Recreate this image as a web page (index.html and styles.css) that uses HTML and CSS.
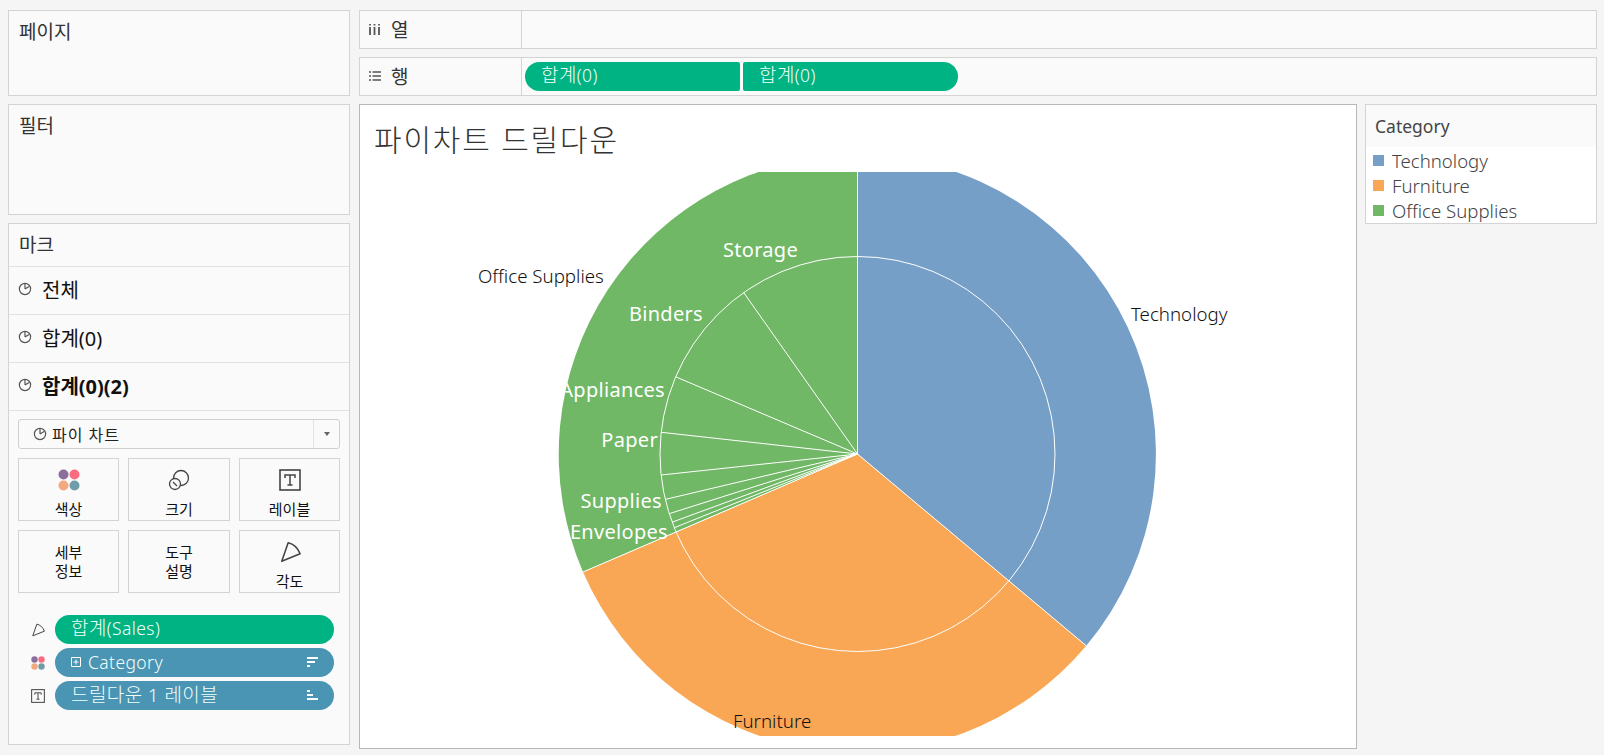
FILE: index.html
```html
<!DOCTYPE html>
<html lang="ko">
<head>
    <meta charset="UTF-8">
    <title>파이차트 드릴다운</title>
    <link rel="stylesheet" href="styles.css">
</head>
<body>
<svg class="defs" width="0" height="0">
    <symbol id="i-pie" viewBox="0 0 14 14">
        <circle cx="7" cy="7" r="5.6" fill="none" stroke="currentColor" stroke-width="1.2"/>
        <path d="M7 7V1.4M7 7l4-2.6" fill="none" stroke="currentColor" stroke-width="1.2"/>
    </symbol>
    <symbol id="i-angle" viewBox="0 0 24 24">
        <path d="M3 22L10 2Q19 4 23 14Z" fill="none" stroke="currentColor" stroke-width="1.7" stroke-linejoin="round"/>
    </symbol>
    <symbol id="i-text" viewBox="0 0 22 22">
        <rect x="1" y="1" width="20" height="20" fill="none" stroke="currentColor" stroke-width="1.6"/>
        <path d="M6 9V6h10v3M11 6v10M8.500 16h5" fill="none" stroke="currentColor" stroke-width="1.5"/>
    </symbol>
    <symbol id="i-dots" viewBox="0 0 22 22">
        <circle cx="5.500" cy="5.500" r="5" fill="#8a6f9c"/>
        <circle cx="16.500" cy="5.500" r="5" fill="#f96d7f"/>
        <circle cx="5.500" cy="16.500" r="5" fill="#f2a97f"/>
        <circle cx="16.500" cy="16.500" r="5" fill="#6f9ca6"/>
    </symbol>
</svg>

<div class="app">
    <div class="side">
        <section class="card card-page"><h2 class="card-title">페이지</h2></section>
        <section class="card card-filter"><h2 class="card-title">필터</h2></section>
        <section class="card marks">
            <h2 class="marks-head">마크</h2>
            <div class="mark-row"><svg class="pie-ic"><use href="#i-pie"/></svg><span>전체</span></div>
            <div class="mark-row"><svg class="pie-ic"><use href="#i-pie"/></svg><span>합계(0)</span></div>
            <div class="mark-row mark-row-on"><svg class="pie-ic"><use href="#i-pie"/></svg><span>합계(0)(2)</span></div>

            <div class="marks-body">
                <div class="select">
                    <div class="select-val"><svg class="pie-ic"><use href="#i-pie"/></svg>파이 차트</div>
                    <div class="select-btn"><i class="caret"></i></div>
                </div>

                <div class="mark-btns">
                    <div class="mark-btn">
                        <svg class="btn-ic" viewBox="0 0 22 22"><use href="#i-dots"/></svg>
                        <span>색상</span>
                    </div>
                    <div class="mark-btn">
                        <svg class="btn-ic" viewBox="0 0 22 22">
                            <circle cx="13" cy="9" r="7.500" fill="none" stroke="#444" stroke-width="1.300"/>
                            <circle cx="7" cy="15" r="5.500" fill="#fafafa" stroke="#444" stroke-width="1.300"/>
                            <path d="M5 13l4 4" stroke="#444" stroke-width="1.300"/>
                        </svg>
                        <span>크기</span>
                    </div>
                    <div class="mark-btn">
                        <svg class="btn-ic" viewBox="0 0 22 22"><use href="#i-text"/></svg>
                        <span>레이블</span>
                    </div>
                    <div class="mark-btn mark-btn-text"><span>세부<br>정보</span></div>
                    <div class="mark-btn mark-btn-text"><span>도구<br>설명</span></div>
                    <div class="mark-btn">
                        <svg class="btn-ic" viewBox="0 0 24 24"><use href="#i-angle"/></svg>
                        <span>각도</span>
                    </div>
                </div>

                <div class="fields">
                    <div class="field">
                        <svg class="field-ic" viewBox="0 0 24 24"><use href="#i-angle"/></svg>
                        <div class="pill pill-green"><span class="pill-txt">합계<small>(Sales)</small></span></div>
                    </div>
                    <div class="field">
                        <svg class="field-ic" viewBox="0 0 22 22"><use href="#i-dots"/></svg>
                        <div class="pill pill-blue">
                            <svg class="plus" viewBox="0 0 10 10"><path d="M.5.5h9v9h-9zM5 2.500v5M2.500 5h5" fill="none" stroke="#fff"/></svg>
                            <span class="pill-txt"><small>Category</small></span>
                            <svg class="sort" viewBox="0 0 11 10"><path d="M0 0h11v2H0zM0 4h8v2H0zM0 8h3v2H0z" fill="#fff"/></svg>
                        </div>
                    </div>
                    <div class="field">
                        <svg class="field-ic" viewBox="0 0 22 22"><use href="#i-text"/></svg>
                        <div class="pill pill-blue">
                            <span class="pill-txt">드릴다운 1 레이블</span>
                            <svg class="sort" viewBox="0 0 11 10"><path d="M0 0h3v2H0zM0 4h6v2H0zM0 8h11v2H0z" fill="#fff"/></svg>
                        </div>
                    </div>
                </div>
            </div>
        </section>
    </div>

    <div class="main">
        <div class="shelf">
            <div class="shelf-label">
                <svg class="shelf-ic" viewBox="0 0 12 12"><path d="M1 1v1.500M1 4v8M5.500 1v1.500M5.500 4v8M10 1v1.500M10 4v8" fill="none" stroke="#555" stroke-width="1.800"/></svg>
                <span>열</span>
            </div>
            <div class="shelf-body"></div>
        </div>
        <div class="shelf">
            <div class="shelf-label">
                <svg class="shelf-ic" viewBox="0 0 12 12"><path d="M0 2h2M3.500 2H12M0 6h2M3.500 6H12M0 10h2M3.500 10H12" fill="none" stroke="#555" stroke-width="1.500"/></svg>
                <span>행</span>
            </div>
            <div class="shelf-body shelf-pills">
                <div class="pill pill-green pill-l"><span class="pill-txt">합계<small>(0)</small></span></div>
                <div class="pill pill-green pill-r"><span class="pill-txt">합계<small>(0)</small></span></div>
            </div>
        </div>

        <div class="work">
            <div class="view">
                <h1 class="view-title">파이차트 드릴다운</h1>
                <svg class="pie" viewBox="0 0 996 564">
                    <g transform="translate(0 2)">
                        <path d="M497.500 280V-19A299 299 0 0 1 726.300 471.800Z" fill="#759fc6"/>
                        <path d="M497.500 280L726.300 471.800A299 299 0 0 1 223 398Z" fill="#faa755"/>
                        <path d="M497.500 280L223 398A299 299 0 0 1 497.500 -19Z" fill="#70b865"/>
                        <g fill="none" stroke="#fff" stroke-width="1">
                            <path d="M497.500 280V-19M497.500 280L726.300 471.800M497.500 280L223 398"/>
                            <circle cx="497.500" cy="280" r="197.500"/>
                            <path d="M497.500 280L383.700 118.600M497.500 280L315.700 202.800M497.500 280L301.200 258.300M497.500 280L301.100 301M497.500 280L305.300 325.400M497.500 280L309.200 339.700M497.500 280L312.100 348.200M497.500 280L314.300 353.700"/>
                        </g>
                    </g>
                    <g class="lbl-in" text-anchor="end">
                        <text x="438" y="85">Storage</text>
                        <text x="343" y="149">Binders</text>
                        <text x="305" y="225">Appliances</text>
                        <text x="298" y="275">Paper</text>
                        <text x="302" y="336">Supplies</text>
                        <text x="308" y="367">Envelopes</text>
                    </g>
                    <g class="lbl-out">
                        <text x="118" y="111">Office Supplies</text>
                        <text x="771" y="149">Technology</text>
                        <text x="373" y="556">Furniture</text>
                    </g>
                </svg>
            </div>

            <aside class="legend">
                <h3 class="legend-title">Category</h3>
                <ul class="legend-list">
                    <li><i class="sw sw-tech"></i>Technology</li>
                    <li><i class="sw sw-furn"></i>Furniture</li>
                    <li><i class="sw sw-office"></i>Office Supplies</li>
                </ul>
            </aside>
        </div>
    </div>
</div>
</body>
</html>
```

FILE: styles.css
```css
*{
    margin:0;
    padding:0;
    box-sizing:border-box;
}
html,body{
    height:100%;
    overflow:hidden;
}
body{
    background:#f5f5f5;
    font-family:"Noto Sans","Noto Sans CJK KR",sans-serif;
    color:#333;
}
.defs{
    position:absolute;
}
.app{
    display:flex;
    gap:9px;
    padding:10px 7px 0 8px;
}
.side{
    width:342px;
    display:flex;
    flex-direction:column;
    gap:8px;
}
.card{
    background:#fafafa;
    border:1px solid #d4d4d4;
}
.card-page{height:86px;}
.card-filter{height:111px;}
.card-title{
    font-size:19px;
    font-weight:400;
    padding:9px 10px;
    line-height:24px;
}

/* marks */
.marks{height:522px;}
.marks-head{
    height:43px;
    font-size:19px;
    font-weight:400;
    line-height:42px;
    padding-left:10px;
    border-bottom:1px solid #e2e2e2;
}
.mark-row{
    height:48px;
    display:flex;
    align-items:center;
    gap:10px;
    padding:0 0 3px 9px;
    font-size:20px;
    color:#111;
    border-bottom:1px solid #e2e2e2;
}
.mark-row-on{font-weight:700;}
.pie-ic{
    width:14px;
    height:14px;
    color:#555;
    flex:none;
}
.marks-body{
    padding:8px 9px 0;
}
.select{
    height:30px;
    display:flex;
    border:1px solid #d0d0d0;
    border-radius:3px;
    font-size:16px;
    color:#222;
}
.select-val{
    flex:1;
    display:flex;
    align-items:center;
    gap:5px;
    padding-left:14px;
    letter-spacing:1px;
}
.select-btn{
    width:26px;
    border-left:1px solid #e4e4e4;
    display:flex;
    align-items:center;
    justify-content:center;
}
.caret{
    border-top:4px solid #666;
    border-left:3.500px solid transparent;
    border-right:3.500px solid transparent;
}
.mark-btns{
    display:grid;
    grid-template-columns:101px 102px 101px;
    grid-auto-rows:63px;
    justify-content:space-between;
    row-gap:9px;
    margin-top:9px;
}
.mark-btn{
    border:1px solid #d4d4d4;
    display:flex;
    flex-direction:column;
    align-items:center;
    justify-content:space-between;
    padding:10px 0 1px;
    font-size:15px;
    line-height:19px;
    color:#111;
    text-align:center;
}
.mark-btn-text{
    justify-content:center;
    padding:0;
}
.btn-ic{
    width:22px;
    height:22px;
    color:#444;
}
.fields{
    margin-top:22px;
    display:flex;
    flex-direction:column;
    gap:4px;
}
.field{
    display:flex;
    align-items:center;
    gap:10px;
    padding-left:13px;
}
.field-ic{
    width:14px;
    height:14px;
    color:#444;
    flex:none;
}
.pill{
    display:flex;
    align-items:center;
    height:29px;
    color:#f2fffb;
    font-size:19px;
    font-weight:300;
}
.field .pill{
    width:279px;
    border-radius:15px;
    padding:0 16px 4px 16px;
}
.field .pill-blue{padding-bottom:2px;}
.pill small{font-size:17.500px;}
.pill-green{background:#00b383;}
.pill-blue{background:#4a94b4;}
.pill-txt{
    line-height:24px;
    letter-spacing:.4px;
}
.plus{
    width:10px;
    height:10px;
    margin-right:7px;
}
.sort{
    width:11px;
    height:10px;
    margin-left:auto;
}

/* shelves */
.main{
    flex:1;
    display:flex;
    flex-direction:column;
    gap:8px;
    min-width:0;
}
.shelf{
    height:39px;
    display:flex;
    background:#fafafa;
    border:1px solid #d4d4d4;
}
.shelf-label{
    width:162px;
    border-right:1px solid #d4d4d4;
    display:flex;
    align-items:center;
    gap:10px;
    padding:0 0 2px 9px;
    font-size:19px;
}
.shelf-ic{
    width:12px;
    height:12px;
}
.shelf-body{flex:1;}
.shelf-pills{
    display:flex;
    align-items:center;
    gap:3px;
    padding-left:3px;
}
.pill-l,.pill-r{
    width:215px;
    padding:0 0 4px 16px;
    border-radius:15px 2px 2px 15px;
}
.pill-r{
    border-radius:2px 15px 15px 2px;
}

/* view */
.work{
    display:flex;
    gap:8px;
    align-items:flex-start;
}
.view{
    width:998px;
    height:645px;
    background:#fff;
    border:1px solid #b8b8b8;
}
.view-title{
    height:67px;
    padding:14px 0 0 14px;
    font-size:30px;
    line-height:42px;
    font-weight:300;
    letter-spacing:1.800px;
    color:#333;
}
.pie{
    display:block;
    width:996px;
    height:564px;
}
.lbl-in text{
    font-size:20px;
    font-weight:400;
    letter-spacing:.3px;
    fill:#fff;
}
.lbl-out text{
    font-size:18.700px;
    font-weight:300;
    fill:#111;
}

/* legend */
.legend{
    width:232px;
    height:120px;
    background:#fff;
    border:1px solid #d4d4d4;
}
.legend-title{
    height:42px;
    background:#fafafa;
    font-size:17.500px;
    font-weight:400;
    line-height:43px;
    padding-left:9px;
    color:#444;
}
.legend-list{
    list-style:none;
    padding-top:1px;
    font-size:18.600px;
    font-weight:300;
    line-height:25px;
    color:#444;
}
.legend-list li{
    display:flex;
    align-items:center;
    gap:8px;
    padding-left:7px;
}
.sw{
    width:11px;
    height:11px;
}
.sw-tech{background:#759fc6;}
.sw-furn{background:#faa755;}
.sw-office{background:#70b865;}
```
